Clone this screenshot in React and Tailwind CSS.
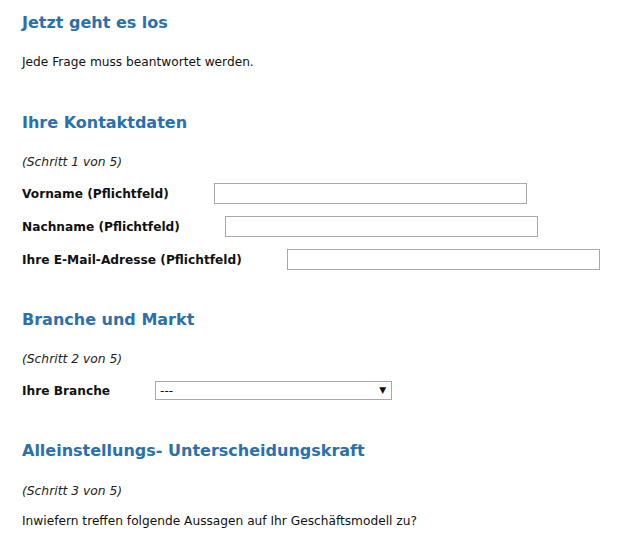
export default function App() {
  const heading = "text-[16px] font-bold text-[#2a6fae] leading-[20px]";
  const step = "text-[12.3px] italic text-[#222] leading-[16px]";
  const label = "text-[12.2px] font-bold text-[#111] leading-[16px]";
  const input = "h-[21px] w-[313px] border border-[#a9a9a9] bg-white ml-[45px]";

  return (
    <div className="min-h-[533px] bg-white px-[22px] pt-[13px] font-['DejaVu_Sans',Verdana,sans-serif] text-[#111]">
      <h2 className={heading}>Jetzt geht es los</h2>
      <p className="mt-[21px] text-[12.2px] leading-[16px]">Jede Frage muss beantwortet werden.</p>

      <h2 className={`${heading} mt-[43px]`}>Ihre Kontaktdaten</h2>
      <p className={`${step} mt-[21px]`}>(Schritt 1 von 5)</p>

      <div className="mt-[13px] flex flex-col gap-[12px]">
        {["Vorname (Pflichtfeld)", "Nachname (Pflichtfeld)", "Ihre E-Mail-Adresse (Pflichtfeld)"].map((t) => (
          <div key={t} className="flex items-center">
            <span className={label}>{t}</span>
            <div className={input} />
          </div>
        ))}
      </div>

      <h2 className={`${heading} mt-[40px]`}>Branche und Markt</h2>
      <p className={`${step} mt-[21px]`}>(Schritt 2 von 5)</p>

      <div className="mt-[14px] flex items-center">
        <span className={label}>Ihre Branche</span>
        <div className="ml-[45px] flex h-[19px] w-[237px] items-center justify-between border border-[#a9a9a9] bg-white pl-[4px] pr-[5px]">
          <span className="text-[12px] leading-none">---</span>
          <span className="text-[9px] leading-none">▼</span>
        </div>
      </div>

      <h2 className={`${heading} mt-[41px]`}>Alleinstellungs- Unterscheidungskraft</h2>
      <p className={`${step} mt-[22px]`}>(Schritt 3 von 5)</p>
      <p className="mt-[14px] text-[12.2px] leading-[16px]">Inwiefern treffen folgende Aussagen auf Ihr Geschäftsmodell zu?</p>
    </div>
  );
}
